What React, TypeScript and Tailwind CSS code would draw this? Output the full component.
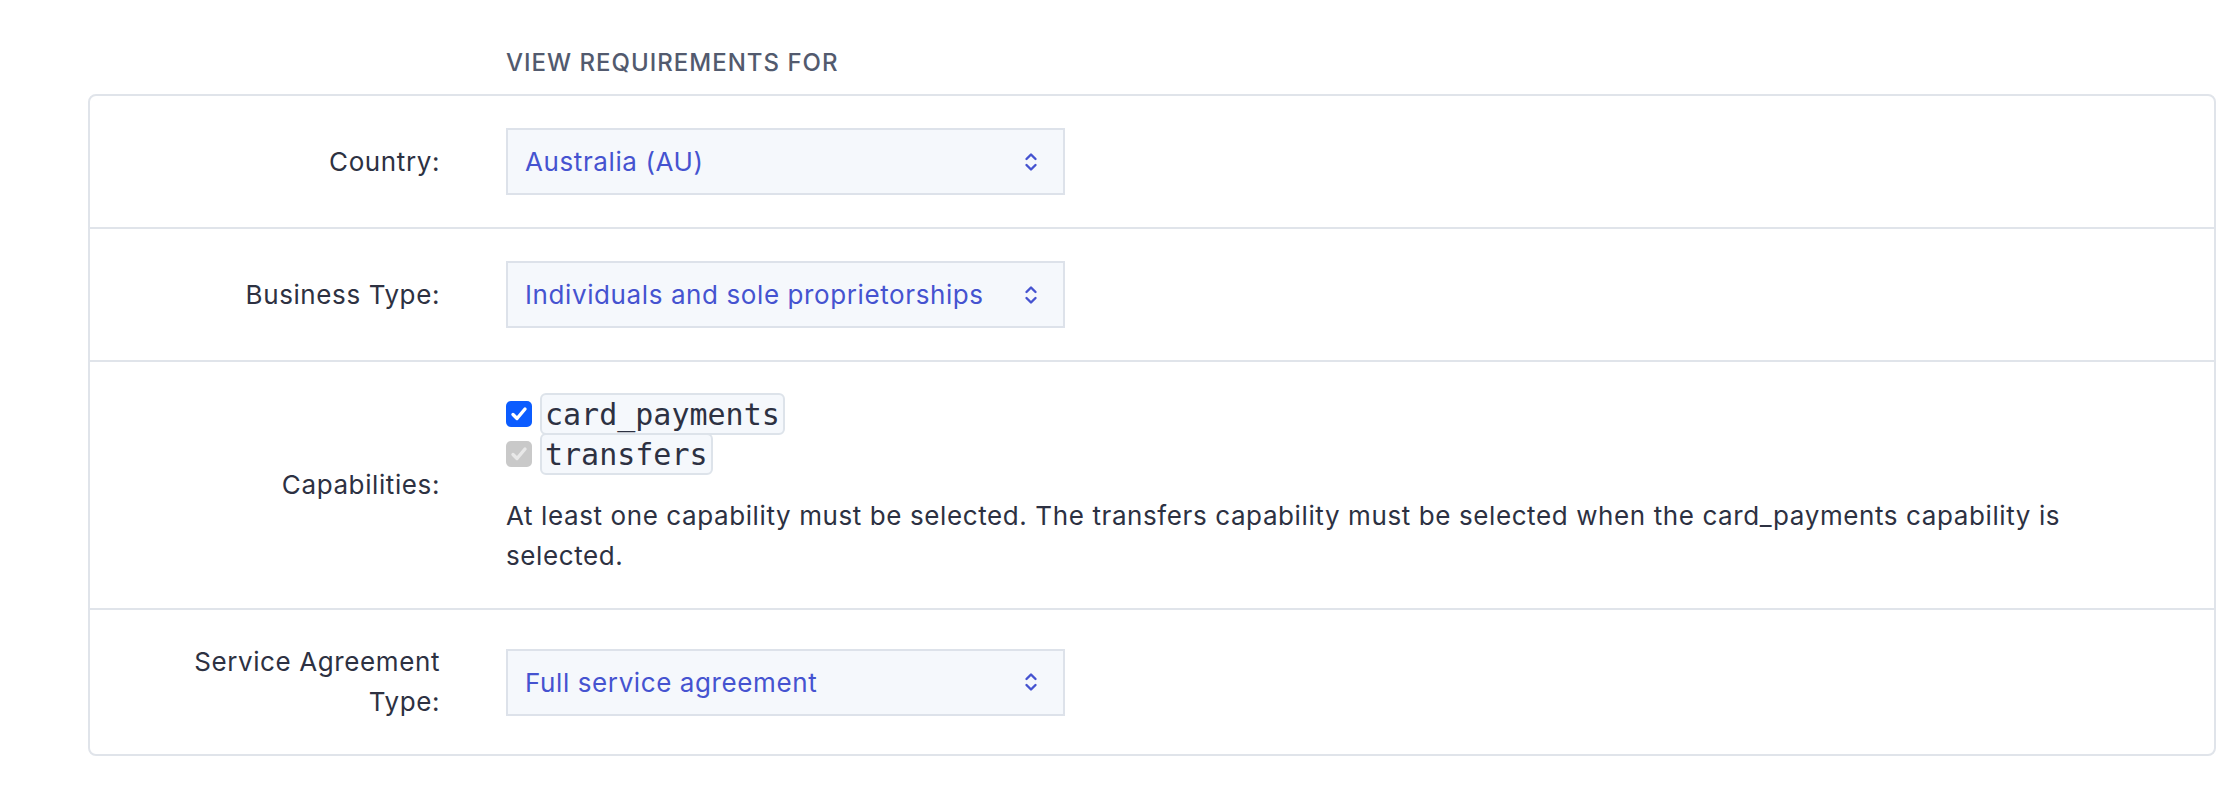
import React, { useState } from 'react';

interface Option {
  value: string;
  label: string;
}

const countries: Option[] = [
  { value: 'AU', label: 'Australia (AU)' },
  { value: 'AT', label: 'Austria (AT)' },
  { value: 'BE', label: 'Belgium (BE)' },
];

const businessTypes: Option[] = [
  { value: 'individual', label: 'Individuals and sole proprietorships' },
  { value: 'company', label: 'Companies' },
];

const agreementTypes: Option[] = [
  { value: 'full', label: 'Full service agreement' },
  { value: 'recipient', label: 'Recipient service agreement' },
];

const Chevrons = () => (
  <svg width="14" height="22" viewBox="0 0 14 22" fill="none" className="shrink-0">
    <path d="M2.5 8 7 3.5 11.5 8" stroke="#4553d0" strokeWidth="2.4" strokeLinecap="round" strokeLinejoin="round" />
    <path d="M2.5 14 7 18.5 11.5 14" stroke="#4553d0" strokeWidth="2.4" strokeLinecap="round" strokeLinejoin="round" />
  </svg>
);

const FakeSelect: React.FC<{ options: Option[]; value: string; onChange: (v: string) => void }> = ({
  options,
  value,
  onChange,
}) => {
  const current = options.find((o) => o.value === value) ?? options[0];
  return (
    <label className="relative flex h-[67px] w-[559px] items-center justify-between border-2 border-[#dde2ea] bg-[#f5f8fc] pl-[17px] pr-[25px] text-[26px] tracking-[0.6px] text-[#4553d0]">
      <span>{current.label}</span>
      <Chevrons />
      <select
        value={value}
        onChange={(e) => onChange(e.target.value)}
        className="absolute inset-0 cursor-pointer opacity-0"
      >
        {options.map((o) => (
          <option key={o.value} value={o.value}>
            {o.label}
          </option>
        ))}
      </select>
    </label>
  );
};

const Check: React.FC<{ checked: boolean; disabled?: boolean; onClick?: () => void }> = ({
  checked,
  disabled,
  onClick,
}) => (
  <button
    type="button"
    onClick={disabled ? undefined : onClick}
    className={`flex h-[26px] w-[26px] shrink-0 items-center justify-center rounded-[5px] ${
      disabled ? 'bg-[#c9c9c9]' : checked ? 'bg-[#0b5cff]' : 'border-2 border-[#8a8a8a] bg-white'
    }`}
  >
    {checked && (
      <svg width="20" height="20" viewBox="0 0 20 20" fill="none">
        <path
          d="M4 10.5l4 4L16 5"
          stroke={disabled ? '#e8e8e8' : '#ffffff'}
          strokeWidth="3.4"
          strokeLinecap="round"
          strokeLinejoin="round"
        />
      </svg>
    )}
  </button>
);

const Row: React.FC<{ label: React.ReactNode; children: React.ReactNode; last?: boolean }> = ({
  label,
  children,
  last,
}) => (
  <div className={`flex items-center py-8 ${last ? '' : 'border-b-2 border-[#e0e4ea]'}`}>
    <div className="ml-[88px] w-[262px] text-right text-[26px] leading-[40px] tracking-[0.6px] text-[#2d3142]">
      {label}
    </div>
    <div className="ml-[66px] flex-1 pr-[48px]">{children}</div>
  </div>
);

export default function App() {
  const [country, setCountry] = useState('AU');
  const [businessType, setBusinessType] = useState('individual');
  const [agreement, setAgreement] = useState('full');
  const [cardPayments, setCardPayments] = useState(true);

  return (
    <div className="min-h-screen bg-white pl-[88px] pr-[6px] pt-[47px] font-['Inter','Noto_Sans',sans-serif]">
      <div className="ml-[418px] text-[24px] font-medium uppercase leading-[32px] tracking-[1px] text-[#525a6e]">
        View requirements for
      </div>
      <div className="mt-[15px] overflow-hidden rounded-[8px] border-2 border-[#e0e4ea]">
        <Row label="Country:">
          <FakeSelect options={countries} value={country} onChange={setCountry} />
        </Row>
        <Row label="Business Type:">
          <FakeSelect options={businessTypes} value={businessType} onChange={setBusinessType} />
        </Row>
        <Row label="Capabilities:">
          <div className="flex flex-col">
            <div className="flex h-[40px] items-center gap-2">
              <Check checked={cardPayments} onClick={() => setCardPayments(!cardPayments)} />
              <code className="flex h-[42px] items-center rounded-[6px] border-2 border-[#dde3ea] bg-[#f5f8fc] px-[3px] font-['DejaVu_Sans_Mono',monospace] text-[30px] text-[#2d3142]">
                card_payments
              </code>
            </div>
            <div className="flex h-[40px] items-center gap-2">
              <Check checked={cardPayments} disabled />
              <code className="flex h-[42px] items-center rounded-[6px] border-2 border-[#dde3ea] bg-[#f5f8fc] px-[3px] font-['DejaVu_Sans_Mono',monospace] text-[30px] text-[#2d3142]">
                transfers
              </code>
            </div>
          </div>
          <p className="mt-[22px] max-w-[1600px] text-[26px] leading-[40px] tracking-[0.6px] text-[#2d3142]">
            At least one capability must be selected. The transfers capability must be selected when the
            card_payments capability is selected.
          </p>
        </Row>
        <Row label="Service Agreement Type:" last>
          <FakeSelect options={agreementTypes} value={agreement} onChange={setAgreement} />
        </Row>
      </div>
    </div>
  );
}
